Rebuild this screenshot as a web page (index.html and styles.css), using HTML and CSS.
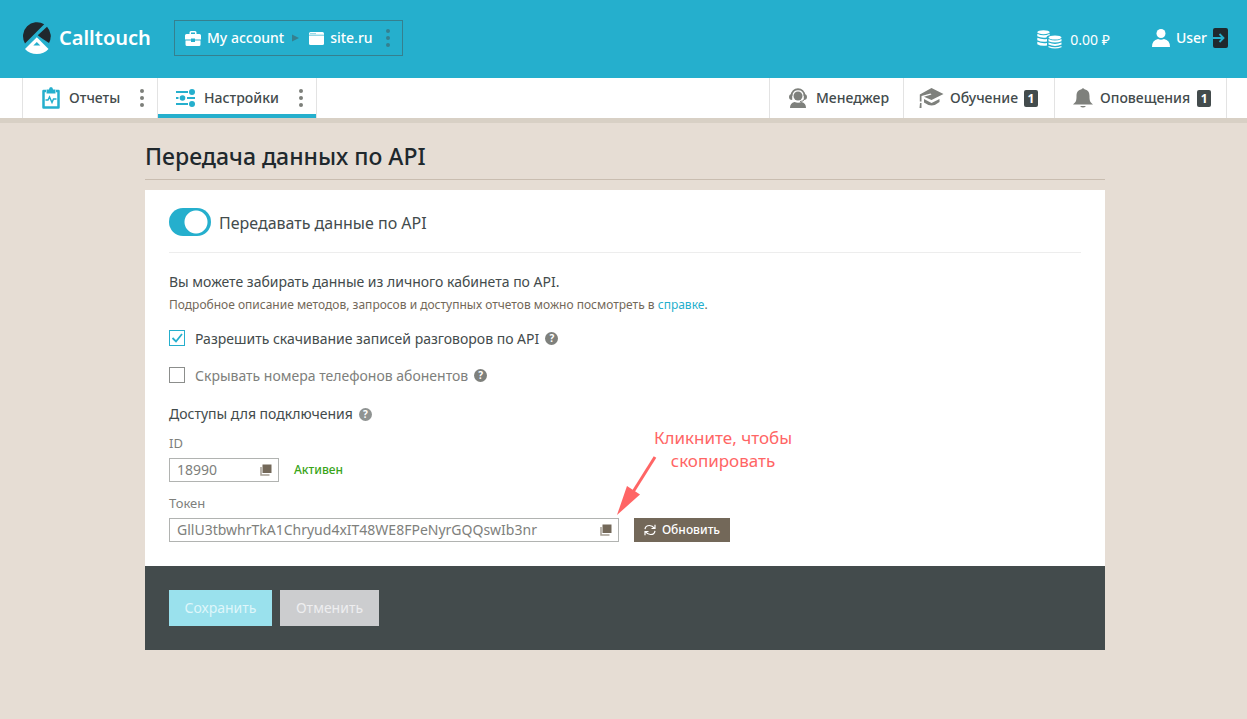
FILE: index.html
```html
<!DOCTYPE html>
<html lang="ru">
<head>
<meta charset="utf-8">
<meta name="viewport" content="width=device-width, initial-scale=1">
<title>Передача данных по API</title>
<link rel="stylesheet" href="styles.css">
</head>
<body>
<header class="topbar">
  <a class="logo" href="#">
    <svg width="30" height="34" viewBox="0 0 30 34" aria-hidden="true">
      <path d="M22.200 3.200A14 14 0 0 0 3 22.400Z" fill="#20282d"/>
      <path d="M25 5.700A14 14 0 0 1 27 22L15.500 14.500Z" fill="#20282d"/>
      <path d="M15 13.500L1 27L5 30L15 20L25 30L29 26Z" fill="#25afcd"/>
      <path d="M14.800 16.300L3 28C6 31.500 10 33 14.800 33S23.500 31.500 26.500 28Z" fill="#fff"/>
      <path d="M14.800 21L11.300 24.500H18.300Z" fill="#25afcd"/>
    </svg>
    <span>Calltouch</span>
  </a>
  <nav class="crumbs" aria-label="Аккаунт">
    <a class="crumb" href="#">
      <svg width="16" height="15" viewBox="0 0 16 15" fill="#fff" aria-hidden="true"><path fill-rule="evenodd" d="M4.500 3V1.500Q4.500 0 6 0H10Q11.500 0 11.500 1.500V3H14.500Q16 3 16 4.500V8.500H10V7.500H6V8.500H0V4.500Q0 3 1.500 3ZM6 3H10V1.500H6ZM.5 9.500H6V11H10V9.500H15.500V13.500Q15.500 15 14 15H2Q.5 15 .5 13.500Z"/></svg>
      <span>My account</span>
    </a>
    <svg class="crumb-arrow" width="7" height="8" viewBox="0 0 7 8" aria-hidden="true"><path d="M0 0.500L7 4L0 7.500Z" fill="#35808f"/></svg>
    <a class="crumb" href="#">
      <svg width="15" height="13" viewBox="0 0 15 13" aria-hidden="true"><path d="M1.500 0H13.500Q15 0 15 1.500V11.500Q15 13 13.500 13H1.500Q0 13 0 11.500V1.500Q0 0 1.500 0Z" fill="#fff"/><path d="M0 3.200H15" stroke="#25afcd" stroke-width=".7"/><path d="M1.500 1.600H2.500M3.500 1.600H4.500M5.500 1.600H6.500" stroke="#25afcd"/></svg>
      <span>site.ru</span>
    </a>
    <button class="dots dots-dark" type="button" aria-label="Меню сайта"><svg width="4" height="18" viewBox="0 0 4 18" fill="currentColor"><circle cx="2" cy="2" r="2"/><circle cx="2" cy="9" r="2"/><circle cx="2" cy="16" r="2"/></svg></button>
  </nav>
  <a class="balance" href="#">
    <svg width="25" height="19" viewBox="0 0 25 19" fill="#fff" aria-hidden="true">
      <ellipse cx="6.500" cy="2.200" rx="6.200" ry="2"/>
      <path d="M.3 3.800Q6.500 6.800 12.700 3.800V5.300Q9.500 5.700 9.500 7.500Q4 8.200.3 6.300ZM.3 7.800Q5 9.800 10 9V11.500Q5 12.500.3 10.300ZM.3 11.800Q5 13.800 10 13V15.500Q4 16.500.3 14.300Z"/>
      <ellipse cx="18" cy="7.500" rx="6.500" ry="2"/>
      <path d="M11.500 9Q18 12 24.500 9V11.200Q18 14 11.500 11.200ZM11.500 12.600Q18 15.500 24.500 12.600V14.600Q18 17.400 11.500 14.600ZM11.500 16Q18 18.600 24.500 16V17.200Q18 20 11.500 17.200Z"/>
    </svg>
    <span>0.00 ₽</span>
  </a>
  <div class="account">
    <a class="user" href="#">
      <svg width="18" height="18" viewBox="0 0 18 18" fill="#fff" aria-hidden="true"><circle cx="9" cy="4.500" r="4.500"/><path d="M0 18Q0 11 6 10Q9 11.500 12 10Q18 11 18 18Z"/></svg>
      <span>User</span>
    </a>
    <button class="logout" type="button" aria-label="Выйти"><svg width="15" height="20" viewBox="0 0 15 20"><rect width="15" height="20" rx="2" fill="#20282d"/><path d="M0 10H10.500M6.500 6L10.500 10L6.500 14" fill="none" stroke="#25afcd" stroke-width="1.800"/></svg></button>
  </div>
</header>

<nav class="menu" aria-label="Основное меню">
  <div class="tab tab-reports">
    <a class="tab-link" href="#">
      <svg width="18" height="22" viewBox="0 0 18 22" aria-hidden="true"><path d="M4 4H1.500V20.500H16.500V4H14" fill="none" stroke="#25afcd" stroke-width="2.500" stroke-linejoin="round"/><path d="M4.500 2.500H7Q7 0 9 0T11 2.500H13.500V6.500H4.500Z" fill="#25afcd"/><path d="M3.500 13H6L7.500 10L10 15.500L11.500 12H14.500" fill="none" stroke="#25afcd" stroke-width="1.500"/></svg>
      <span>Отчеты</span>
    </a>
    <button class="dots" type="button" aria-label="Отчеты: меню"><svg width="4" height="18" viewBox="0 0 4 18" fill="currentColor"><circle cx="2" cy="2" r="2"/><circle cx="2" cy="9" r="2"/><circle cx="2" cy="16" r="2"/></svg></button>
  </div>
  <div class="tab tab-settings tab-active">
    <a class="tab-link" href="#" aria-current="page">
      <svg width="19" height="18" viewBox="0 0 19 18" fill="#25afcd" aria-hidden="true"><path d="M0 3H12M0 9H2.500M11 9H19M0 15H12" stroke="#25afcd" stroke-width="2"/><circle cx="16" cy="3" r="3"/><circle cx="6.500" cy="9" r="2.800"/><circle cx="16" cy="15" r="3"/></svg>
      <span>Настройки</span>
    </a>
    <button class="dots" type="button" aria-label="Настройки: меню"><svg width="4" height="18" viewBox="0 0 4 18" fill="currentColor"><circle cx="2" cy="2" r="2"/><circle cx="2" cy="9" r="2"/><circle cx="2" cy="16" r="2"/></svg></button>
  </div>
  <div class="menu-right">
    <a class="tool tool-manager" href="#">
      <svg width="20" height="20" viewBox="0 0 20 20" fill="#7e807c" aria-hidden="true"><path d="M3.500 8C3.500-1 16.500-1 16.500 8" fill="none" stroke="#7e807c" stroke-width="1.800"/><circle cx="10" cy="8" r="4.500"/><path d="M4.200 6V12Q1 12 1 9T4.200 6ZM15.800 6V12Q19 12 19 9T15.800 6ZM2 20Q2 15 6.500 14Q10 15.500 13.500 14Q18 15 18 20Z"/><path d="M16.500 11Q16 13.500 12 13.500" fill="none" stroke="#7e807c"/></svg>
      <span>Менеджер</span>
    </a>
    <a class="tool tool-learn" href="#">
      <svg width="25" height="20" viewBox="0 0 25 20" fill="#7e807c" aria-hidden="true"><path d="M12.500 0L24.500 6L12.500 12L5 8.800L12.500 6.500L11.500 5.500L2.500 8V13.500H.8V6.500ZM5 11L12.500 15L20.500 11V14Q13 20.500 5 14.500ZM1 15H2.500V20H0.500Z"/></svg>
      <span>Обучение</span><b class="badge">1</b>
    </a>
    <a class="tool tool-alerts" href="#">
      <svg width="20" height="20" viewBox="0 0 20 20" fill="#7e807c" aria-hidden="true"><path d="M8.500 1.200Q10-.5 11.500 1.200C15.500 2 16.500 5 16.500 8C16.500 13 17 14 20 16.500H0C3 14 3.500 13 3.500 8C3.500 5 4.500 2 8.500 1.200ZM7 18H13Q10 21 7 18Z"/></svg>
      <span>Оповещения</span><b class="badge">1</b>
    </a>
  </div>
</nav>

<main class="page">
  <h1 class="title">Передача данных по API</h1>
  <form class="panel">
    <div class="panel-body">
      <div class="switch-row">
        <input class="switch" id="api" type="checkbox" role="switch" checked>
        <label for="api">Передавать данные по API</label>
      </div>
      <p class="lead">Вы можете забирать данные из личного кабинета по API.</p>
      <p class="note">Подробное описание методов, запросов и доступных отчетов можно посмотреть в <a href="#">справке</a>.</p>
      <div class="check-row">
        <input class="check" id="rec" type="checkbox" checked>
        <label for="rec">Разрешить скачивание записей разговоров по API</label>
        <button class="help" type="button" aria-label="Подсказка">?</button>
      </div>
      <div class="check-row check-muted">
        <input class="check" id="hide" type="checkbox">
        <label for="hide">Скрывать номера телефонов абонентов</label>
        <button class="help" type="button" aria-label="Подсказка">?</button>
      </div>
      <h2 class="subtitle">Доступы для подключения <button class="help help-light" type="button" aria-label="Подсказка">?</button></h2>
      <label class="field-label" for="ident">ID</label>
      <div class="field-row">
        <div class="field field-id">
          <input id="ident" type="text" value="18990" readonly>
          <button class="copy" type="button" aria-label="Копировать ID"><svg width="12" height="12" viewBox="0 0 12 12"><path d="M1 3V11H9.500" fill="none" stroke="#a49d92" stroke-width="1.500"/><rect x="2.500" y="0.500" width="9" height="8.500" fill="#736859"/></svg></button>
        </div>
        <span class="status">Активен</span>
      </div>
      <label class="field-label field-label-token" for="token">Токен</label>
      <div class="field-row">
        <div class="field field-token">
          <input id="token" type="text" value="GllU3tbwhrTkA1Chryud4xIT48WE8FPeNyrGQQswIb3nr" readonly>
          <button class="copy" type="button" aria-label="Копировать токен"><svg width="12" height="12" viewBox="0 0 12 12"><path d="M1 3V11H9.500" fill="none" stroke="#a49d92" stroke-width="1.500"/><rect x="2.500" y="0.500" width="9" height="8.500" fill="#736859"/></svg></button>
          <div class="hint">
            <p>Кликните, чтобы скопировать</p>
            <svg width="40" height="60" viewBox="0 0 40 60" aria-hidden="true"><path d="M38 1L16 36" stroke="#ff6565" stroke-width="3"/><path d="M0 59L10 30L23 38.500Z" fill="#ff6565"/></svg>
          </div>
        </div>
        <button class="refresh" type="button"><svg width="12" height="12" viewBox="0 0 12 12" fill="none" stroke="#fff" stroke-width="1.200" aria-hidden="true"><path d="M1 5.200Q1.500 1.500 5.500 1.500Q8.500 1.500 10.500 4.300M11 .8V4.500H7.500M11 6.800Q10.500 10.500 6.500 10.500Q3.500 10.500 1.500 7.700M1 11.200V7.500H4.500"/></svg>Обновить</button>
      </div>
    </div>
    <div class="panel-foot">
      <button class="btn btn-save" type="submit" disabled>Сохранить</button>
      <button class="btn btn-cancel" type="button" disabled>Отменить</button>
    </div>
  </form>
</main>
</body>
</html>
```
FILE: styles.css
```css
* { box-sizing: border-box; }

body {
  margin: 0;
  min-height: 100vh;
  background: #e6ddd4;
  color: #434b4c;
  font: 500 14px/20px "Noto Sans", "Open Sans", sans-serif;
}

a { color: #25afcd; text-decoration: none; }
button, input { font: inherit; color: inherit; }
button { padding: 0; border: 0; background: none; cursor: pointer; }
svg { display: block; flex: none; }
h1, h2, p { margin: 0; }

.topbar {
  display: flex;
  align-items: center;
  height: 78px;
  padding: 0 19px 2px 22px;
  background: #25afcd;
}
.topbar a { color: #fff; }
.logo {
  display: flex;
  align-items: center;
  gap: 7px;
  width: 152px;
  font: 600 20px/24px "Noto Sans", sans-serif;
}
.crumbs {
  display: flex;
  align-items: center;
  height: 36px;
  width: 229px;
  padding: 0 12px 0 10px;
  border: 1px solid #35808f;
}
.crumb { display: flex; align-items: center; gap: 6px; }
.crumb-arrow { margin: 0 10px 0 8px; }
.dots { color: #7c7f7a; }
.dots-dark { margin-left: auto; color: #35808f; }
.balance {
  display: flex;
  align-items: center;
  gap: 8px;
  margin-left: auto;
  padding-top: 3px;
  font-weight: 400;
}
.account {
  display: flex;
  align-items: center;
  gap: 6px;
  margin-left: 42px;
}
.user { display: flex; align-items: center; gap: 6px; }

.menu {
  display: flex;
  height: 45px;
  padding: 0 20px 0 22px;
  background: #fff;
  border-bottom: 5px solid #d8d0c5;
}
.tab {
  display: flex;
  align-items: center;
  justify-content: space-between;
  padding: 0 13px 0 19px;
  border-left: 1px solid #e3e3e3;
}
.tab a, .tool { color: #434b4c; }
.tab-reports { width: 135px; }
.tab-settings { width: 160px; padding-left: 18px; border-right: 1px solid #e3e3e3; }
.tab-active { box-shadow: inset 0 -4px #25afcd; }
.tab-link { display: flex; align-items: center; gap: 9px; }
.menu-right { display: flex; margin-left: auto; border-right: 1px solid #e3e3e3; }
.tool {
  display: flex;
  align-items: center;
  gap: 8px;
  border-left: 1px solid #e3e3e3;
}
.tool-manager { width: 134px; padding-left: 18px; }
.tool-learn { width: 151px; padding-left: 15px; gap: 6px; }
.tool-alerts { width: 172px; padding-left: 18px; gap: 7px; }
.badge {
  width: 14px;
  border-radius: 2px;
  background: #434b4c;
  color: #fff;
  font-size: 12px;
  line-height: 17px;
  text-align: center;
}

.page { max-width: 963px; margin: 0 auto; padding: 17px 0 69px 3px; }
.title {
  padding-bottom: 6px;
  margin-bottom: 10px;
  border-bottom: 1px solid #c9bdb0;
  color: #20282d;
  font-size: 23px;
  font-weight: 500;
  line-height: 33px;
}
.panel { background: #fff; font-weight: 400; }
.panel-body { padding: 18px 24px 24px; }
.switch-row {
  display: flex;
  align-items: center;
  gap: 8px;
  padding-bottom: 16px;
  margin-bottom: 19px;
  border-bottom: 1px solid #ededed;
  font-size: 16px;
}
.switch-row label, .check-row label { padding-top: 2px; }
.switch {
  appearance: none;
  width: 42px;
  height: 28px;
  margin: 0;
  border-radius: 14px;
  background: radial-gradient(circle at 27px 14px, #fff 11px, #25afcd 12px);
}
.lead { margin-bottom: 4px; }
.note { margin-bottom: 13px; color: #736859; font-size: 12px; line-height: 18px; }
.check-row { display: flex; align-items: center; margin-bottom: 15px; }
.check-muted { color: #7e807c; }
.check {
  appearance: none;
  width: 16px;
  height: 16px;
  margin: 0 10px 0 0;
  border: 1px solid #8c8e8c;
}
.check:checked {
  border-color: #25afcd;
  background: url("data:image/svg+xml,%3Csvg xmlns='http://www.w3.org/2000/svg' viewBox='0 0 14 14'%3E%3Cpath d='M2.500 7L6 10.500L12 3' fill='none' stroke='%2325afcd' stroke-width='1.800'/%3E%3C/svg%3E");
}
.help {
  width: 13px;
  height: 13px;
  margin-left: 6px;
  border-radius: 50%;
  background: #7e807c;
  color: #fff;
  font: 700 10px/13px "Noto Sans", sans-serif;
  text-align: center;
}
.help-light { background: #8f9392; }
.subtitle {
  display: flex;
  align-items: center;
  margin: 18px 0 10px;
  font: inherit;
}
.field-label {
  display: block;
  margin-bottom: 6px;
  color: #7e807c;
  font-size: 13px;
  line-height: 18px;
}
.field-label-token { margin-top: 12px; }
.field-row { display: flex; align-items: center; gap: 15px; }
.field {
  position: relative;
  display: flex;
  align-items: center;
  height: 24px;
  padding: 0 6px 0 7px;
  border: 1px solid #b1b3b1;
}
.field input {
  flex: 1;
  min-width: 0;
  padding: 0;
  border: 0;
  outline: 0;
  background: none;
  color: #7e807c;
}
.field-id { width: 110px; }
.field-token { flex: 0 1 450px; }
.status { color: #3aa51a; font-size: 12px; font-weight: 500; }
.hint {
  position: absolute;
  left: 447px;
  bottom: 25px;
  display: flex;
  align-items: flex-end;
  color: #ff6565;
  font-size: 17px;
  line-height: 23px;
  text-align: center;
}
.hint p { width: 150px; padding-bottom: 44px; margin-left: -9px; order: 2; }
.refresh {
  display: flex;
  align-items: center;
  justify-content: center;
  gap: 6px;
  width: 96px;
  height: 24px;
  background: #736859;
  color: #fff;
  font-size: 12px;
  font-weight: 500;
}
.panel-foot { display: flex; gap: 8px; padding: 24px; background: #434b4c; }
.btn { height: 36px; cursor: default; }
.btn-save { width: 103px; background: #9ae1ed; color: #dff6fa; }
.btn-cancel { width: 99px; background: #cccdcf; color: #eeeeef; }
```
